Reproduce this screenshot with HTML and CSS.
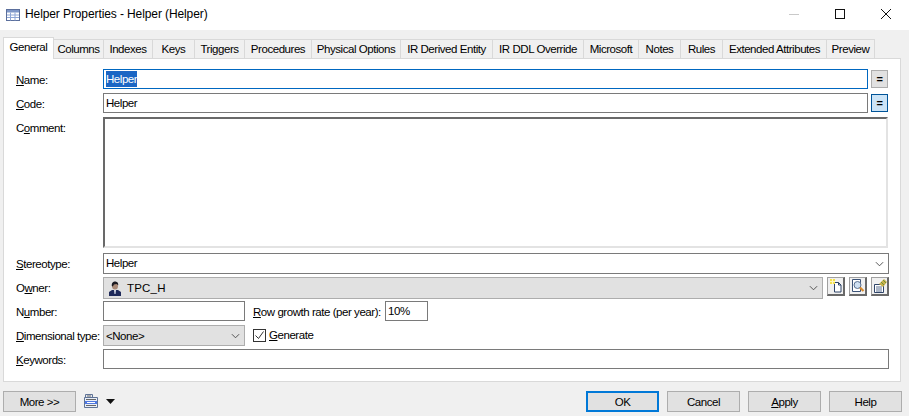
FILE: index.html
```html
<!DOCTYPE html>
<html lang="en">
<head>
  <meta charset="UTF-8">
  <title>Helper Properties - Helper (Helper)</title>
  <link rel="stylesheet" href="styles.css">
</head>
<body>
  <div class="window">
    <div class="titlebar">
      <svg class="app-icon" width="16" height="16" viewBox="0 0 16 16">
        <rect x="1.5" y="2.5" width="13" height="11" fill="#fff" stroke="#5b6f9c"/>
        <rect x="2" y="3" width="12" height="2.5" fill="#7f97c8"/>
        <path d="M2 8h12M2 10.5h12M5.5 5.5v8M10 5.5v8" stroke="#8ea6d6" fill="none"/>
      </svg>
      <span class="title">Helper Properties - Helper (Helper)</span>
      <div class="controls">
        <svg width="46" height="30" viewBox="0 0 46 30"><path d="M18 14.5h10" stroke="#c9c9c9"/></svg>
        <svg width="46" height="30" viewBox="0 0 46 30"><rect x="18.5" y="9.5" width="9" height="9" fill="none" stroke="#111"/></svg>
        <svg width="46" height="30" viewBox="0 0 46 30"><path d="M18 9l10 10M28 9L18 19" stroke="#111" fill="none"/></svg>
      </div>
    </div>

    <div class="content">
      <div class="tabs">
        <div class="tab active w-general">General</div>
        <div class="tab w-columns">Columns</div>
        <div class="tab w-indexes">Indexes</div>
        <div class="tab w-keys">Keys</div>
        <div class="tab w-triggers">Triggers</div>
        <div class="tab w-procedures">Procedures</div>
        <div class="tab w-physical">Physical Options</div>
        <div class="tab w-derived">IR Derived Entity</div>
        <div class="tab w-ddl">IR DDL Override</div>
        <div class="tab w-microsoft">Microsoft</div>
        <div class="tab w-notes">Notes</div>
        <div class="tab w-rules">Rules</div>
        <div class="tab w-extended">Extended Attributes</div>
        <div class="tab w-preview">Preview</div>
      </div>

      <div class="panel">
        <div class="form">
          <label class="lbl"><u>N</u>ame:</label>
          <div class="line">
            <div class="field focused"><span class="selected">Helper</span></div>
            <div class="eq">=</div>
          </div>

          <label class="lbl"><u>C</u>ode:</label>
          <div class="line">
            <div class="field">Helper</div>
            <div class="eq on">=</div>
          </div>

          <label class="lbl">C<u>o</u>mment:</label>
          <div class="memo"></div>

          <label class="lbl"><u>S</u>tereotype:</label>
          <div class="field tall">Helper
            <svg class="chev" width="9" height="6" viewBox="0 0 10 6"><path d="M1 1l4 4 4-4" fill="none" stroke="#444"/></svg>
          </div>

          <label class="lbl">O<u>w</u>ner:</label>
          <div class="line owner-line">
            <div class="combo owner">
              <svg class="person" width="14" height="15" viewBox="0 0 14 15">
                <path d="M1 15v-4l3-2h6l3 2v4z" fill="#1f2a5a"/>
                <path d="M6 9h2l-.5 4h-1z" fill="#d8dce8"/>
                <ellipse cx="7" cy="5" rx="3" ry="3.6" fill="#a98a78"/>
                <path d="M3.8 5C3.5 1.5 5.5.6 7 .6s3.6 1 3.2 3.6L8.500 3 6 3.500 4.800 5.500z" fill="#1b1b22"/>
              </svg>
              <span class="owner-name">TPC_H</span>
              <svg class="chev" width="9" height="6" viewBox="0 0 10 6"><path d="M1 1l4 4 4-4" fill="none" stroke="#444"/></svg>
            </div>
            <div class="tool">
              <svg width="14" height="14" viewBox="0 0 14 14">
                <path d="M5.500 3.500h4l2.500 2.500v7H5.500z" fill="#fff" stroke="#2f4468"/>
                <path d="M9.500 3.500v2.500H12" fill="none" stroke="#2f4468"/>
                <rect x="1" y="0" width="5" height="5" fill="#f4e04d"/>
                <path d="M3.500 0v5M1 2.500h5" stroke="#fff8c0"/>
              </svg>
            </div>
            <div class="tool">
              <svg width="14" height="14" viewBox="0 0 14 14">
                <path d="M1.500.5h8v12h-8z" fill="#fff" stroke="#3c5378"/>
                <circle cx="6.500" cy="6" r="3.500" fill="#cfe0f2" stroke="#5a6f8f"/>
                <path d="M9 8.500l3.500 3.500" stroke="#d98a2b" stroke-width="2.200"/>
              </svg>
            </div>
            <div class="tool">
              <svg width="14" height="14" viewBox="0 0 14 14">
                <path d="M1.500 5.500h9v8h-9z" fill="#fff" stroke="#2f4468"/>
                <path d="M3 8h6M3 10h6M3 12h6" stroke="#5a6f8f"/>
                <path d="M6 5l5-5 3 3-4 5z" fill="#c9b24a"/>
                <path d="M8 3l3 3M10 1l3 3" stroke="#6f8f3c"/>
              </svg>
            </div>
          </div>

          <label class="lbl">N<u>u</u>mber:</label>
          <div class="line">
            <div class="field small"></div>
            <label class="growth"><u>R</u>ow growth rate (per year):</label>
            <div class="field rate">10%</div>
          </div>

          <label class="lbl"><u>D</u>imensional type:</label>
          <div class="line">
            <div class="combo dim">&lt;None&gt;
              <svg class="chev" width="9" height="6" viewBox="0 0 10 6"><path d="M1 1l4 4 4-4" fill="none" stroke="#444"/></svg>
            </div>
            <div class="check">
              <svg width="13" height="13" viewBox="0 0 13 13">
                <rect x="0.500" y="0.500" width="12" height="12" fill="#fff" stroke="#333"/>
                <path d="M2.500 6.500l3 3 5-7" fill="none" stroke="#333"/>
              </svg>
              <span><u>G</u>enerate</span>
            </div>
          </div>

          <label class="lbl"><u>K</u>eywords:</label>
          <div class="field">&nbsp;</div>
        </div>
      </div>

      <div class="footer">
        <button class="btn">More &gt;&gt;</button>
        <svg class="doc-icon" width="14" height="14" viewBox="0 0 14 14">
          <path d="M1.500.5h7v3h-7z" fill="#e4e8f0" stroke="#5f7396"/>
          <path d="M3 2h4" stroke="#666"/>
          <path d="M.5 3.500h13v10H.5z" fill="#e9eef7" stroke="#5f7396"/>
          <path d="M2 5.500h10" stroke="#666"/>
          <path d="M1 7h12v3H1z" fill="#4f78e0"/>
          <path d="M3 8.500h8" stroke="#fff"/>
          <path d="M2 11.500h10" stroke="#666"/>
        </svg>
        <svg class="drop" width="9" height="5" viewBox="0 0 9 5"><path d="M0 0h9L4.500 5z" fill="#111"/></svg>
        <div class="spacer"></div>
        <button class="btn primary">OK</button>
        <button class="btn">Cancel</button>
        <button class="btn"><u>A</u>pply</button>
        <button class="btn">Help</button>
      </div>
    </div>
  </div>
</body>
</html>
```

FILE: styles.css
```css
html, body {
  margin: 0;
  padding: 0;
}

body {
  width: 909px;
  height: 416px;
  overflow: hidden;
  font-family: "Liberation Sans", Arial, sans-serif;
  font-size: 11.5px;
  letter-spacing: -0.45px;
  color: #000;
  background: #f0f0f0;
}

.titlebar {
  height: 30px;
  background: #fff;
  display: flex;
  align-items: center;
  padding-left: 5px;
}

.app-icon {
  margin-right: 4px;
}

.title {
  flex: 1;
  position: relative;
  top: -1px;
  font-size: 12px;
  letter-spacing: -0.1px;
}

.controls {
  display: flex;
}

.controls svg {
  display: block;
}

.content {
  padding: 7px 8px 0 3px;
}

.tabs {
  display: flex;
  height: 21px;
  align-items: flex-end;
  position: relative;
  z-index: 1;
}

.tab {
  box-sizing: border-box;
  height: 19px;
  line-height: 19px;
  text-align: center;
  background: #f0f0f0;
  border: 1px solid #d9d9d9;
  border-left: 0;
  border-bottom: 0;
  white-space: nowrap;
}

.tab.active {
  line-height: 18px;
  background: #fff;
  border-left: 1px solid #d9d9d9;
  margin-bottom: -1px;
  height: 22px;
}

.w-general { width: 51px; }
.w-columns { width: 50px; }
.w-indexes { width: 49px; }
.w-keys { width: 42px; }
.w-triggers { width: 50px; }
.w-procedures { width: 67px; }
.w-physical { width: 89px; }
.w-derived { width: 92px; }
.w-ddl { width: 91px; }
.w-microsoft { width: 55px; }
.w-notes { width: 42px; }
.w-rules { width: 42px; }
.w-extended { width: 104px; }
.w-preview { width: 48px; }

.panel {
  box-sizing: border-box;
  height: 324px;
  background: #fff;
  border: 1px solid #d9d9d9;
  padding: 10px 11px 0 12px;
}

.form {
  display: grid;
  grid-template-columns: 87px 786px;
  grid-template-rows: 24px 24px 136px 24px 24px 24px 24px 20px;
  align-items: start;
}

.lbl {
  line-height: 22px;
  white-space: nowrap;
}

.line {
  display: flex;
  align-items: flex-start;
}

.field {
  box-sizing: border-box;
  height: 20px;
  flex: 1;
  border: 1px solid #7a7a7a;
  background: #fff;
  padding-left: 2px;
  line-height: 18px;
  position: relative;
}

.field.focused {
  border-color: #0067c0;
}

.field.tall {
  height: 21px;
}

.field.small {
  flex: 0 0 142px;
}

.field.rate {
  flex: 0 0 43px;
}

.selected {
  display: inline-block;
  line-height: 16px;
  margin-top: 1px;
  vertical-align: top;
  background: #1b66c4;
  color: #fff;
}

.eq {
  box-sizing: border-box;
  width: 17px;
  height: 18px;
  margin: 1px 1px 0 3px;
  border: 1px solid #adadad;
  background: #e1e1e1;
  text-align: center;
  line-height: 16px;
  font-weight: bold;
  font-size: 11px;
}

.eq.on {
  background: #cce4f7;
  border-color: #005499;
}

.memo {
  box-sizing: border-box;
  width: 785px;
  height: 131px;
  background: #fff;
  border: 2px solid #e3e3e3;
  border-top-color: #696969;
  border-left-color: #696969;
}

.combo {
  box-sizing: border-box;
  background: #e1e1e1;
  border: 1px solid #adadad;
  position: relative;
  padding-left: 4px;
}

.chev {
  position: absolute;
  right: 4px;
  top: 7px;
}

.owner {
  width: 721px;
  height: 22px;
  display: flex;
  align-items: center;
}

.person {
  flex: none;
}

.owner-name {
  margin-left: 5px;
  letter-spacing: 0.2px;
}

.tool {
  box-sizing: border-box;
  width: 18px;
  height: 19px;
  margin-left: 4px;
  border: 1px solid #a0a0a0;
  border-right: 2px solid #696969;
  border-bottom: 2px solid #696969;
  background: #f0f0f0;
  display: flex;
  align-items: center;
  justify-content: center;
}

.owner-line .tool:first-of-type {
  margin-left: 2px;
}

.growth {
  margin-left: 8px;
  width: 132px;
  line-height: 22px;
  white-space: nowrap;
}

.dim {
  width: 142px;
  height: 21px;
  line-height: 20px;
  padding-left: 2px;
}

.check {
  display: flex;
  align-items: center;
  height: 20px;
  margin-left: 8px;
  gap: 3px;
}

.check svg {
  display: block;
}

.footer {
  display: flex;
  align-items: center;
  height: 21px;
  margin: 9px -1px 0 0;
  gap: 8px;
}

.btn {
  box-sizing: border-box;
  width: 73px;
  height: 21px;
  padding: 0;
  font: inherit;
  letter-spacing: inherit;
  color: #000;
  background: #e1e1e1;
  border: 1px solid #adadad;
}

.btn.primary {
  border: 2px solid #0078d7;
}

.doc-icon {
  margin-top: -2px;
}

.spacer {
  flex: 1;
}
```
